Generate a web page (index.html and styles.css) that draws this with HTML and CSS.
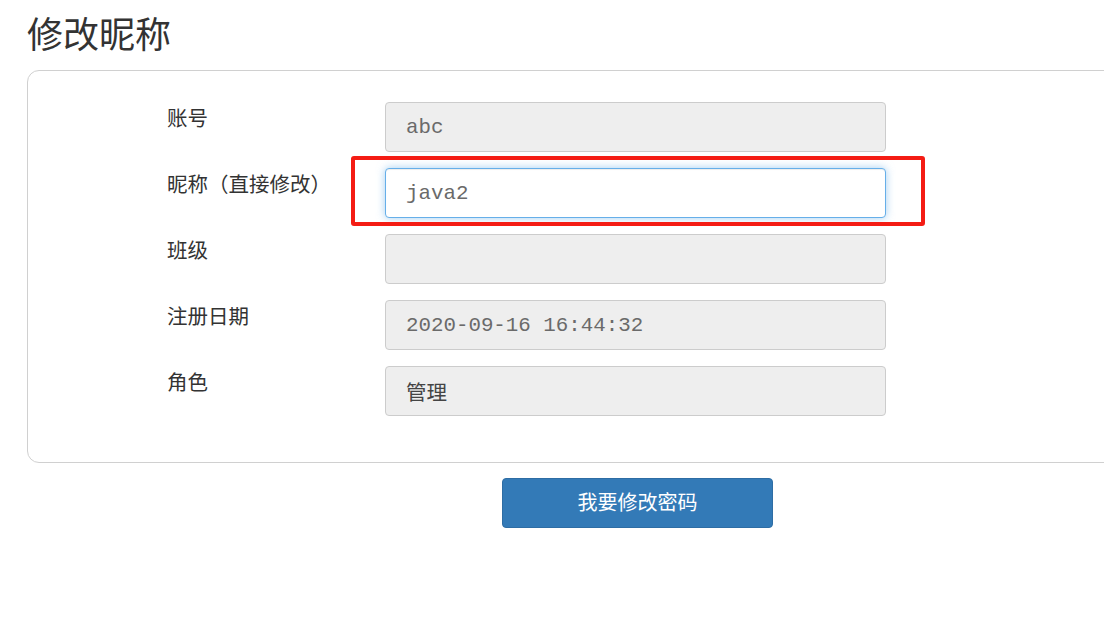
FILE: index.html
```html
<!DOCTYPE html>
<html lang="zh">
<head>
<meta charset="utf-8">
<title>修改昵称</title>
<link rel="stylesheet" href="styles.css">
</head>
<body>
<div class="page">
  <h1 class="title">修改昵称</h1>
  <div class="card">
    <div class="row">
      <label class="label">账号</label>
      <div class="field disabled mono">abc</div>
    </div>
    <div class="row">
      <label class="label">昵称（直接修改）</label>
      <div class="field focus mono">java2</div>
    </div>
    <div class="row">
      <label class="label">班级</label>
      <div class="field disabled mono"></div>
    </div>
    <div class="row">
      <label class="label">注册日期</label>
      <div class="field disabled mono">2020-09-16 16:44:32</div>
    </div>
    <div class="row">
      <label class="label">角色</label>
      <div class="field disabled cjk">管理</div>
    </div>
    <div class="highlight"></div>
  </div>
  <div class="actions">
    <button class="btn">我要修改密码</button>
  </div>
</div>
</body>
</html>
```
FILE: styles.css
```css
html, body {
  margin: 0;
  padding: 0;
  background: #fff;
  overflow: hidden;
}
body {
  font-family: "Noto Sans CJK SC", "Liberation Sans", sans-serif;
  color: #333;
}
.page {
  padding-left: 27px;
  width: 1200px;
}
.title {
  margin: 0;
  padding-top: 8px;
  height: 70px;
  box-sizing: border-box;
  font-size: 36px;
  font-weight: 400;
  line-height: 48px;
  color: #333;
}
.card {
  position: relative;
  width: 1160px;
  box-sizing: border-box;
  border: 1px solid #d0d0d0;
  border-radius: 12px;
  padding: 31px 0 46px 139px;
  display: flex;
  flex-direction: column;
  gap: 16px;
}
.row {
  display: flex;
  align-items: flex-start;
}
.label {
  width: 218px;
  flex: none;
  font-size: 20.5px;
  line-height: 28px;
  padding-top: 1px;
  color: #333;
}
.field {
  width: 501px;
  height: 50px;
  box-sizing: border-box;
  border: 1px solid #ccc;
  border-radius: 4px;
  padding: 0 20px;
  display: flex;
  align-items: center;
  color: #555;
}
.disabled {
  background: #eeeeee;
}
.focus {
  background: #fff;
  border-color: #66afe9;
  box-shadow: inset 0 1px 1px rgba(0,0,0,.075), 0 0 8px rgba(102,175,233,.6);
}
.mono {
  font-family: "Liberation Mono", monospace;
  font-size: 20.8px;
  color: #6a6a6a;
}
.cjk {
  font-size: 20.5px;
  color: #444;
}
.highlight {
  position: absolute;
  left: 323px;
  top: 85px;
  width: 574px;
  height: 70px;
  box-sizing: border-box;
  border: 4px solid #f41c14;
  border-radius: 3px;
}
.actions {
  padding-top: 15px;
  padding-left: 475px;
}
.btn {
  width: 271px;
  height: 50px;
  background: #337ab7;
  border: 1px solid #2e6da4;
  border-radius: 4px;
  color: #fff;
  font-family: "Noto Sans CJK SC", sans-serif;
  font-size: 20px;
  padding: 0;
  padding-bottom: 4px;
}
```
